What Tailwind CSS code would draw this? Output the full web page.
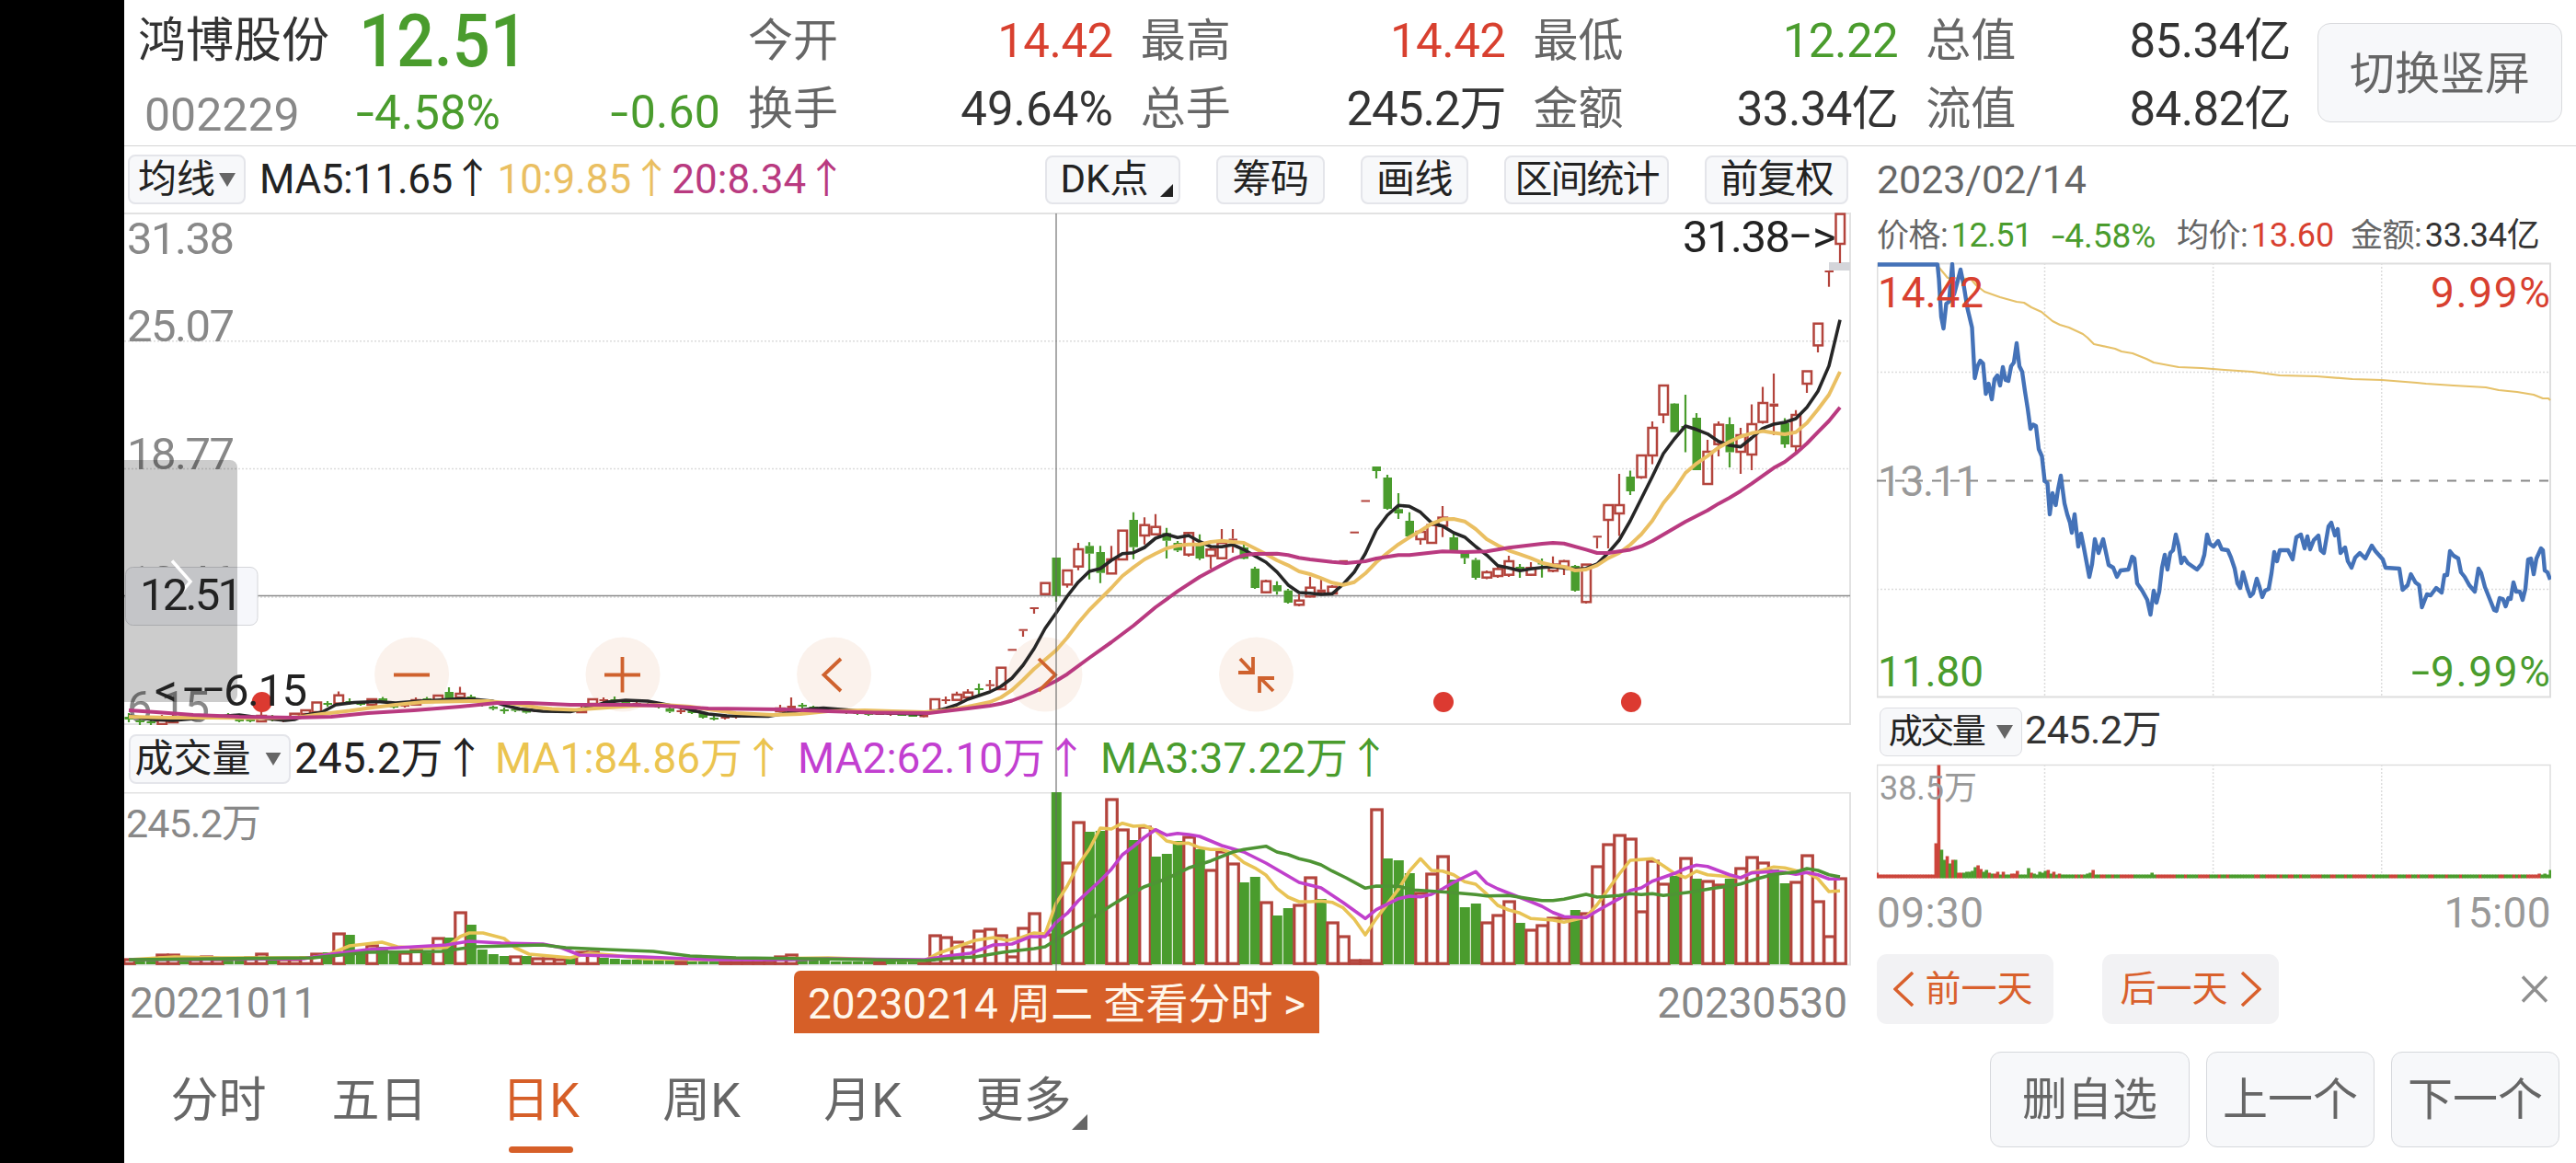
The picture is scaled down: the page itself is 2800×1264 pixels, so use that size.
<!DOCTYPE html>
<html lang="zh-CN">

  <head>
    <meta charset="UTF-8" />
    <meta name="viewport" content="width=device-width, initial-scale=1.0" />
    <script src="https://cdn.jsdelivr.net/npm/@tailwindcss/browser@4"></script>
    <title>鸿博股份 002229</title>
  </head>

  <body class="flex w-[2800px] h-[1264px] overflow-hidden bg-white font-['Roboto','Noto_Sans_CJK_SC',sans-serif] leading-none text-[#333] whitespace-nowrap">
    <aside class="w-[135px] shrink-0 bg-black"></aside>
    <div class="flex flex-col flex-1 min-w-0">

      <!-- quote header -->
      <header class="flex h-[159px] border-b border-[#d5d5d5]">
        <div class="flex flex-col w-[648px] pl-[15px]">
          <div class="flex items-center h-[84px] pt-[5px]">
            <h1 class="w-[240px] text-[52px]">鸿博股份</h1>
            <p class="text-[80px] font-medium text-[#4a9c2d] origin-left scale-x-[.9]">12.51</p>
          </div>
          <div class="flex items-center h-[75px] pt-0.5">
            <p class="w-[237px] pl-[7px] pt-1.5 text-[50px] text-[#888]">002229</p>
            <p class="flex-1 text-[51px] text-[#4a9c2d]"><span class="inline-block mr-1.5 origin-left scale-x-[1.4]">-</span>4.58%</p>
            <p class="text-[50px] tracking-[0.2px] text-[#4a9c2d]"><span class="inline-block mr-0.5 origin-right scale-x-[1.4]">-</span>0.60</p>
          </div>
        </div>
        <dl class="grid grid-cols-4 gap-x-[30px] w-[1677px] ml-[30px] pt-[7px] grid-rows-[74px_74px] text-[51px]">
          <div class="flex items-center justify-between"><dt class="text-[49px] text-[#666]">今开</dt><dd class="text-[#d8402f] tracking-[-0.5px]">14.42</dd></div>
          <div class="flex items-center justify-between"><dt class="text-[49px] text-[#666]">最高</dt><dd class="text-[#d8402f] tracking-[-0.5px]">14.42</dd></div>
          <div class="flex items-center justify-between"><dt class="text-[49px] text-[#666]">最低</dt><dd class="text-[#4a9c2d] tracking-[-0.5px]">12.22</dd></div>
          <div class="flex items-center justify-between"><dt class="text-[49px] text-[#666]">总值</dt><dd class="tracking-[-0.6px]">85.34亿</dd></div>
          <div class="flex items-center justify-between"><dt class="text-[49px] text-[#666]">换手</dt><dd>49.64%</dd></div>
          <div class="flex items-center justify-between"><dt class="text-[49px] text-[#666]">总手</dt><dd class="tracking-[-1px]">245.2万</dd></div>
          <div class="flex items-center justify-between"><dt class="text-[49px] text-[#666]">金额</dt><dd class="tracking-[-0.6px]">33.34亿</dd></div>
          <div class="flex items-center justify-between"><dt class="text-[49px] text-[#666]">流值</dt><dd class="tracking-[-0.6px]">84.82亿</dd></div>
        </dl>
        <button class="w-[266px] h-[108px] mt-[25px] ml-[29px] rounded-[14px] border border-[#d9dadd] bg-[#f7f8fa] pt-0.5 text-[49px] text-[#666]">切换竖屏</button>
      </header>

      <div class="flex h-[965px]">
        <!-- daily K chart -->
        <section class="relative flex flex-col w-[1877px]">
          <div class="flex items-center h-[72px] pl-1 pr-[3px] text-[44px] text-[#222]">
            <button class="flex items-center justify-center gap-1 w-[128px] h-[54px] rounded-lg border-2 border-[#e4e5ea] bg-[#f7f8fa] text-[42px]">均线<svg class="w-[18px] h-[15px]" viewBox="0 0 18 15"><path d="M0 0h18L9 15z" fill="#666" /></svg></button>
            <p class="ml-[15px] tracking-[-0.4px]">MA5:11.65↑</p>
            <p class="ml-[5px] text-[#eabf62]">10:9.85↑</p>
            <p class="text-[#b93a80]">20:8.34↑</p>
            <div class="flex gap-[39px] ml-auto text-[42px]">
              <button class="relative w-[147px] h-[53px] pr-[18px] rounded-lg border-2 border-[#e4e5ea] bg-[#f7f8fa]">DK点<svg class="absolute right-1.5 bottom-1.5 w-3.5 h-3.5" viewBox="0 0 14 14"><path d="M14 0v14H0z" fill="#222" /></svg></button>
              <button class="w-[118px] h-[53px] rounded-lg border-2 border-[#e4e5ea] bg-[#f7f8fa] tracking-[-0.5px]">筹码</button>
              <button class="w-[117px] h-[53px] rounded-lg border-2 border-[#e4e5ea] bg-[#f7f8fa] tracking-[-0.5px]">画线</button>
              <button class="w-[179px] h-[53px] rounded-lg border-2 border-[#e4e5ea] bg-[#f7f8fa] text-[41px] tracking-[-2px]">区间统计</button>
              <button class="w-[156px] h-[53px] rounded-lg border-2 border-[#e4e5ea] bg-[#f7f8fa] tracking-[-1px]">前复权</button>
            </div>
          </div>

          <svg id="kline" class="w-[1877px] h-[557px]" viewBox="135 231 1877 557" font-size="49">
            <g stroke="#dcdcdc" stroke-width="1.5" stroke-dasharray="2 2">
              <path d="M135 370.7H2011M135 509.5H2011M135 649H2011" />
            </g>
            <path d="M135 232H2011V787H135" fill="none" stroke="#e2e2e2" stroke-width="2" />
            <g fill="#888">
              <text x="138" y="276" textLength="117">31.38</text>
              <text x="138" y="371" textLength="117">25.07</text>
              <text x="138" y="510" textLength="117">18.77</text>
              <text x="138" y="649" textLength="117">12.46</text>
              <text x="138" y="785" textLength="90">6.15</text>
            </g>
            <g fill="#fbf2ec">
              <circle cx="447.6" cy="733" r="40.5" />
              <circle cx="677" cy="733" r="40.5" />
              <circle cx="906.6" cy="733" r="40.5" />
              <circle cx="1136" cy="733" r="40.5" />
              <circle cx="1365.5" cy="733" r="40.5" />
            </g>
            <rect x="1988" y="285" width="23" height="9" fill="#d4d5da" />
            <path d="M135 647.5H2011" stroke="#8c8c8c" stroke-width="1.5" />
            <g id="candles"></g>
            <g id="price-ma" fill="none" stroke-width="4" stroke-linejoin="round"></g>
            <g fill="#dc3a31">
              <circle cx="284.7" cy="763" r="11" />
              <circle cx="1569" cy="763" r="11" />
              <circle cx="1773" cy="763" r="11" />
            </g>
            <g fill="none" stroke="#cf622e" stroke-width="3.8">
              <path d="M428 733.5h39M657 733.5h39M676.5 714v38.5M914 716l-18.500 17.500 18.500 17.500M1129 716l18 17.500-18 17.500" />
              <path d="M1348 716l14 15M1362 714v17h-16M1384 751l-14-14M1385 737h-16v16" />
            </g>
            <!-- crosshair price tag -->
            <rect x="136.500" y="616.500" width="143.500" height="63" rx="8" fill="#f6f7fb" stroke="#d5d6da" />
            <path d="M135 500h115a8 8 0 0 1 8 8v247a8 8 0 0 1-8 8H135z" fill="#000" fill-opacity=".2" />
            <path d="M187 609.500l20 22.500-20 24" fill="none" stroke="#fff" stroke-width="3.500" />
            <g fill="#222">
              <text x="152" y="663" textLength="112">12.51</text>
              <text x="168" y="767">&lt;</text>
              <text x="199" y="764" textLength="44" lengthAdjust="spacingAndGlyphs">--</text>
              <text x="243" y="767" textLength="91">6.15</text>
              <text x="1829" y="274" textLength="117">31.38</text>
              <text x="1946" y="271" textLength="22" lengthAdjust="spacingAndGlyphs">-</text>
              <text x="1970" y="274">&gt;</text>
            </g>
          </svg>

          <div class="flex items-center h-[73px] pl-[5px] pb-0.5 text-[46px] text-[#222]">
            <button class="flex items-center justify-center gap-[15px] w-[176px] h-[54px] pr-1 mt-0.5 rounded-lg border-2 border-[#e4e5ea] bg-[#f7f8fa] text-[42px]">成交量<svg class="w-[18px] h-[14px]" viewBox="0 0 18 15"><path d="M0 0h18L9 15z" fill="#666" /></svg></button>
            <p class="w-[218px] ml-[4px]">245.2万↑</p>
            <p class="w-[329px] text-[#ebc450]">MA1:84.86万↑</p>
            <p class="w-[329px] text-[#c23fd0]">MA2:62.10万↑</p>
            <p class="text-[#4a9c2d]">MA3:37.22万↑</p>
          </div>

          <svg id="volume" class="w-[1877px] h-[190px]" viewBox="135 861 1877 190" font-size="43">
            <path d="M135 861.500H2011V1048.500H135" fill="none" stroke="#e2e2e2" stroke-width="2" />
            <text x="137" y="910" fill="#888" textLength="147">245.2万</text>
            <g id="volume-bars"></g>
            <g id="volume-ma" fill="none" stroke-width="3.6" stroke-linejoin="round"></g>
          </svg>

          <div class="flex justify-between h-[73px] pl-[6px] pr-[4px] pt-1 text-[46px] text-[#888]">
            <p class="w-[722px] pt-3 tracking-[-0.5px]">20221011</p>
            <button class="w-[571px] h-[68px] pt-1 rounded-t-[7px] bg-[#d65f28] text-[46px] text-[#fff6ea]">20230214 周二 查看分时 &gt;</button>
            <p class="flex-1 pt-3 text-right">20230530</p>
          </div>
          <div class="absolute left-[1012px] top-[73px] w-0.5 h-[823px] bg-[#666]/55"></div>
        </section>

        <!-- intraday panel for the selected day -->
        <section class="flex flex-col w-[733px] ml-7">
          <p class="h-[72px] pt-[15px] text-[43px] tracking-[-0.1px] text-[#666]">2023/02/14</p>
          <div class="flex items-center h-[48px] pt-0.5 text-[36px] text-[#666]">
            <p class="w-[190px]"><span class="text-[35px] tracking-[-0.5px]">价格</span>:<span class="ml-[3px] tracking-[-0.5px] text-[#4a9c2d]">12.51</span></p>
            <p class="w-[136px] text-[37px] text-[#4a9c2d]"><span class="inline-block mr-1 origin-left scale-x-[1.4]">-</span>4.58%</p>
            <p class="w-[189px]"><span class="text-[35px] tracking-[-0.5px]">均价</span>:<span class="ml-[3px] text-[#d8402f]">13.60</span></p>
            <p><span class="text-[35px] tracking-[-0.5px]">金额</span>:<span class="ml-[3px] tracking-[-0.3px] text-[#333]">33.34亿</span></p>
          </div>
          <svg class="w-[733px] h-[480px] mt-1.5" viewBox="2040 285 733 480" font-size="46">
            <path d="M2222.500 286V758M2405.600 286V758M2588.700 286V758M2040 404.500H2772M2040 640.500H2772" stroke="#dcdcdc" stroke-width="1.500" stroke-dasharray="2 2" />
            <path d="M2040.500 286.500H2772V757.500H2040.500z" fill="none" stroke="#dedede" stroke-width="2" />
            <path d="M2040 522.500H2772" stroke="#888" stroke-width="2" stroke-dasharray="10 10" />
            <text x="2041" y="539" fill="#999" textLength="110">13.11</text>
            <g id="intraday" fill="none" stroke-linejoin="round"></g>
            <g fill="#d8402f">
              <text x="2041" y="334" textLength="115">14.42</text>
              <text x="2642" y="334" textLength="130">9.99%</text>
            </g>
            <g fill="#4a9c2d">
              <text x="2041" y="746" textLength="115">11.80</text>
              <text x="2621" y="745" textLength="20" lengthAdjust="spacingAndGlyphs">-</text>
              <text x="2642" y="746" textLength="130">9.99%</text>
            </g>
          </svg>
          <div class="flex items-center h-[60px] pl-[3px] text-[43px]">
            <button class="flex items-center justify-center gap-3.5 w-[155px] h-[53px] mr-[3px] rounded-lg border border-[#dcdde2] bg-[#f7f8fa] text-[37px] tracking-[-2.5px] text-[#222]">成交量<svg class="w-[18px] h-[15px]" viewBox="0 0 18 15"><path d="M0 0h18L9 15z" fill="#666" /></svg></button>
            <p class="-mt-1 tracking-[-0.5px]">245.2万</p>
          </div>
          <svg class="w-[733px] h-[126px] mt-[5px]" viewBox="2040 830 733 126" font-size="36">
            <path d="M2222.500 831V954M2405.600 831V954M2588.700 831V954" stroke="#dcdcdc" stroke-width="1.500" stroke-dasharray="2 2" />
            <path d="M2040.500 954V831.500H2772V954" fill="none" stroke="#dedede" stroke-width="1.500" />
            <g id="minute-bars"></g>
            <text x="2043" y="869" fill="#999" textLength="106">38.5万</text>
          </svg>
          <div class="flex justify-between items-center h-[71px] text-[46px] tracking-[0.4px] text-[#999]">
            <p>09:30</p>
            <p>15:00</p>
          </div>
          <div class="flex items-center mt-2.5 text-[39px] text-[#d9602c]">
            <button class="flex items-center justify-center gap-3 w-[192px] h-[76px] pr-1 rounded-[11px] bg-[#f2f2f4]"><svg class="w-[22px] h-[38px]" viewBox="0 0 22 38"><path d="M21 1L2 19l19 18" fill="none" stroke="#d9602c" stroke-width="3.500" /></svg>前一天</button>
            <button class="flex items-center justify-center gap-3.5 w-[192px] h-[76px] ml-[53px] rounded-[11px] bg-[#f2f2f4]">后一天<svg class="w-[22px] h-[38px]" viewBox="0 0 22 38"><path d="M1 1l19 18L1 37" fill="none" stroke="#d9602c" stroke-width="3.500" /></svg></button>
            <svg class="w-[30px] h-[30px] ml-auto mr-[3px]" viewBox="0 0 30 30"><path d="M2 1.500l26 27M28 1.500l-26 27" stroke="#8f8f8f" stroke-width="3.4" /></svg>
          </div>
        </section>
      </div>

      <!-- period tabs -->
      <footer class="flex flex-1 justify-between pl-[15px] pr-[18px] text-[52px] text-[#666]">
        <nav class="flex text-center">
          <p class="w-[175px] pt-[47px]">分时</p>
          <p class="w-[175px] pt-[47px]">五日</p>
          <div class="flex flex-col items-center w-[175px] pt-[47px] text-[#d65f28]">
            <p>日K</p>
            <i class="w-[70px] h-[7px] mt-[23px] rounded-full bg-[#d65f28]"></i>
          </div>
          <p class="w-[175px] pt-[47px]">周K</p>
          <p class="w-[175px] pt-[47px]">月K</p>
          <p class="relative w-[175px] pt-[47px]">更多<svg class="absolute right-[18px] bottom-9 w-[17px] h-[17px]" viewBox="0 0 14 14"><path d="M14 0v14H0z" fill="#666" /></svg></p>
        </nav>
        <div class="flex gap-[18px] pt-[19px] text-[49px]">
          <button class="w-[217px] h-[104px] rounded-xl border-[1.5px] border-[#d6d8dc] bg-[#f7f8fa]">删自选</button>
          <button class="w-[183px] h-[104px] rounded-xl border-[1.5px] border-[#d6d8dc] bg-[#f7f8fa]">上一个</button>
          <button class="w-[183px] h-[104px] rounded-xl border-[1.5px] border-[#d6d8dc] bg-[#f7f8fa]">下一个</button>
        </div>
      </footer>
    </div>

    <script>
      const RED = '#b3443c'
      const GREEN = '#4a9c2d'
      const x = i => 140 + 12 * i
      const line = (pts, color, extra = '') => `<polyline points="${pts}" stroke="${color}" ${extra}/>`

      // type, body top, body bottom, high, low   (r = hollow up, f = flat up, g = down)
      const candles = `g 779 782 775 785;g 783 785 780 788;g 784 786 783 788;r 783 787 777 787;r 780 785 775 785;g 777 779 775 781;f 778 780 777 780;f 778 780 777 781;g 777 779 776 781;g 777 779 775 782;g 782 784 781 785;g 782 784 781 785;r 778 784 773 784;g 779 781 777 784;f 782 784 781 785;r 775.7 779 775 779;r 772 776 771 776;r 763.5 774 763 774;g 764 766 762 768;r 755.7 764.600 751.600 766;g 762 764 759 766;g 764 766 762 767;r 760 766 760 766;g 759 762 757.500 764;g 767 769 765 770;f 766 768 765 769;r 761 765.700 758 766;g 759 761 757.500 762;r 756 761 755 761;g 752 759 747 760;r 754 758 746.500 759;g 757 759 755 762;g 764 766 762 768;g 768 770.500 767 772;g 771 773 769 775.700;g 770.500 772.500 769 774;g 772 774.500 770 775.500;f 772 774 771 774;f 772 774 771 774;f 772 774 771 774;g 771 773 770 774;r 771.700 774 764 774;r 760 765 760 765;f 760 762 758 764;g 760 762 757 764;g 763 765 762 766;f 764 766 763 767;g 765 767 764 768;g 767 769 765 770;g 770 773.500 769 775;f 772 774 770 776;g 772.500 775 771 776;g 775 780 774 781;g 780 782 778 783;f 779 781 778 782;f 778 780 777 781;g 778 780 777 780;f 777 779 776 779;g 776 778 775 779;r 770 773 766 774;f 767 770 758 771;g 766 768 764 770;g 768 770 767 771;f 770 772 769 772;g 771 773 770 774;g 772 775 771 776;g 774 776 773 777;g 775 777 773 778;f 775 777 774 777;f 775 777 774 778;g 776 778 775 778;g 777 779 776 779;f 777 779.500 776 780;r 760 772 760 772;f 760 762 757 765;r 755 760.700 751.700 761;r 752.700 758 749 759;g 748 750 743 755;f 743.700 745.700 739 750;r 725.700 749 725.700 749;f 705.300 707.300 705.300 707.300;f 683.700 685.700 683.700 692;f 660 662 660 667;r 633.700 645.700 633.700 645.700;g 606 647.700 606 654;r 620 635.300 620 638.700;r 597 615.700 590 619.700;g 593.300 601.700 589.300 629.700;g 600 622.700 593.300 633.700;r 608 623.300 593.300 623.300;r 576.700 608 576.700 608;g 565 594.700 556.700 607.700;r 570.700 582 562.300 591.700;r 572.700 580.700 558.700 581.700;g 579.300 587.700 573.700 607;g 590 598.300 588 600;r 579.300 602.700 578 605;g 591.700 607 580.700 608.700;r 597.300 604 595 618;r 590 606.700 575 606.700;f 585.500 587.500 575 600.700;g 595 607.300 591.700 608;g 618 639 616 640;r 631.700 643.700 630 645;g 636 642.700 631.700 646.300;g 641.700 655 640 656;r 652.700 657.300 646 659;r 638.700 648.300 626.700 649.300;f 640.700 644 630 646;r 637.700 645 636 646;f 608.800 610.800 608.800 610.800;f 577.700 579.700 577.700 579.700;f 543.500 545.500 543.500 545.500;g 507 512 507 520;g 519 553 516 554;g 553.300 558 536 564;g 566 583 556.700 584.400;r 578 586 576 592;r 570.700 590 569 590;r 562.600 571.500 550 583.700;g 584 598.500 579.600 598.500;g 601 606.600 600 613;g 608.500 628 606.600 630;r 622 627.700 620 629.500;r 618.400 626 616 628;r 610 624.700 604 627;g 616 618 613 628;r 617.300 624.700 611 626;g 611.500 613.500 607 627.700;r 613.600 620.300 604.800 622;r 610 616 608.500 625;g 615 642 614 643;r 613.600 654.300 613.600 656;f 582.300 584.300 582.300 596;r 549 565 549 596;r 549 558 515 582.600;g 518 534 511.500 538;r 495 518.600 495 520.400;r 465 495 458 504.500;r 419 450.500 419 460;g 438.600 469.700 438 470;g 463 465 429 491.500;g 454 511 449 511;r 491 526 478 526;r 461.600 482.700 458 496;g 461 491.500 453.400 508;r 473 491 465 515;r 461 494 439.400 511;r 438 458.600 420.500 460.500;f 438.600 442 406 473;g 460 483 454.500 486.700;r 451 485 445.700 491;r 403.500 417 403.500 427;r 351.700 375.400 351.700 383;f 294 296 294 311.700;r 232.600 265 232.600 286`
      document.getElementById('candles').innerHTML = candles.split(';').map((row, i) => {
        const [type, ...rest] = row.split(' ')
        const [top, bottom, high, low] = rest.map(Number)
        const color = type === 'g' ? GREEN : RED
        const wick = `<path d="M${x(i)} ${high}V${top}M${x(i)} ${bottom}V${low}" stroke="${color}" stroke-width="2.2"/>`
        const body = type === 'r'
          ? `<rect x="${x(i) - 4.5}" y="${top}" width="9.5" height="${bottom - top}" fill="none" stroke="${color}" stroke-width="2.5"/>`
          : `<rect x="${x(i) - 4.5}" y="${top}" width="9.5" height="${bottom - top}" fill="${color}"/>`
        return wick + body
      }).join('')

      document.getElementById('price-ma').innerHTML =
        line('140,778 165,782 188,783 212,781 260,777 290,781 310,783 320,782 333,777 350,774 365,766 385,763.5 410,762.5 430,764 455,762 475,761 498,759.5 515,760 535,762 550,767 565,770.5 590,773 620,773.5 640,769 660,763 680,761 704,762 720,765 745,770 770,776 790,778 835,778.5 850,776 875,771 895,769.5 920,771.5 950,774.5 1000,776 1016,773 1028,770 1040,766 1052,760 1064,756 1076,752 1088,746 1100,737 1112,723 1124,705 1136,683 1148,666 1160,648 1172,632.7 1184,621 1196,618 1208,609 1220,601.7 1232,600.7 1244,595 1256,585 1268,580.7 1280,584.3 1292,582 1304,588.7 1316,594 1328,594.3 1340,592 1352,597.3 1364,604.3 1376,611 1388,621.7 1400,635.7 1412,644 1424,644.7 1436,646 1448,645.3 1460,635 1472,621.7 1484,601.7 1496,576 1508,560 1520,549.3 1532,550.3 1544,556.7 1556,568.3 1568,571.7 1580,579 1592,583.7 1604,594 1616,603.3 1628,614.7 1640,617.3 1652,620.3 1664,618.3 1676,616.7 1688,616 1712,618.8 1724,617.7 1736,613 1748,601 1760,587 1772,566 1784,542 1796,518 1808,493 1820,477 1832,463 1844,466.8 1856,471.6 1868,479.7 1880,484 1892,485.6 1904,476 1916,465.6 1928,461 1940,459 1952,455 1964,442.7 1976,425.3 1988,397.6 2000,347.6', '#262626', 'stroke-width="3.6"') +
        line('140,779 185,780 230,780 280,780.5 320,780 350,776 380,772.5 405,769 430,766 460,763 510,762 530,762 560,765 585,769 600,770.5 625,771.5 660,769 690,767 720,766 750,768 770,771 800,775 840,777 870,776 900,773 940,772 970,773 1005,774 1030,772 1052,768 1076,763 1088,758 1100,750 1112,739 1124,727 1136,717 1148,706.7 1160,693 1172,677 1184,663 1196,651 1208,639 1220,626 1232,616.7 1244,608 1256,601.7 1268,596 1280,593 1292,591.7 1304,591.7 1316,589 1328,587.7 1340,589 1352,590 1364,596 1376,602.3 1388,609 1400,614.3 1412,621 1424,624 1436,628.3 1448,633.3 1460,635.7 1472,632.7 1484,623.3 1496,611 1508,601 1520,591.7 1532,584 1544,577 1556,569.3 1568,564.3 1580,564 1592,566.7 1604,575 1616,586 1628,592.7 1640,598.3 1652,602.3 1664,606.7 1676,611.7 1688,614.4 1700,616 1712,620 1724,619 1736,614.4 1748,606.6 1760,601 1772,592 1784,580.7 1796,566 1808,546.7 1820,532 1832,514 1844,503.8 1856,495.6 1868,486.4 1880,480 1892,474.5 1904,470.8 1916,468.6 1928,470.5 1940,472 1952,469.7 1964,459.7 1976,445 1988,429 2000,404', '#eabf62') +
        line('140,772 170,774 210,777 260,779 320,780 360,779 400,775 450,772 500,768 540,764 575,764 620,766 680,766 720,767 770,770 850,771 900,773 950,774.5 1010,775 1052,770 1076,767 1088,764.7 1100,761.5 1112,757 1124,752 1136,746 1148,740 1160,732.7 1184,715 1208,698 1232,680 1256,660 1280,642.7 1304,627 1328,614 1340,607.7 1352,603.3 1364,602 1388,601.7 1400,603.3 1412,606.3 1424,608 1448,610.7 1463,612 1484,610 1496,607 1520,603.3 1532,603.3 1568,599.3 1592,600 1616,599.3 1640,595.3 1676,591 1688,590 1700,590.7 1724,597.4 1736,601 1748,601 1772,597.4 1784,593.7 1796,588 1832,567 1856,554.8 1868,547.4 1880,541 1892,533.7 1904,525.6 1928,508.6 1940,502 1952,492.7 1964,482 1976,469.7 1988,457.5 2000,442.7', '#b93a80')

      // bar tops, negative for a falling day
      const tops = [1042, -1042, -1043, 1037, 1037, -1042, 1042, 1039, 1042, -1042, -1043, 1040, 1036, -1040, 1042, 1042, 1040, 1036, -1035, 1014, -1016, -1035, 1027, -1029, -1033, 1035, 1032, -1036, 1019, -1019, 991, -1005, -1032, -1037, -1039, 1039, -1039, 1041, 1041, 1042, -1040, 1034, 1034, -1041, -1042, -1043, -1043, -1043, -1043, -1044, 1044, -1045, -1045, -1045, 1045, 1045, 1045, 1045, 1043, 1039, 1037, -1044, -1044, -1044, -1045, -1045, -1045, -1045, 1045, -1045, -1045, -1045, 1044,
        1016, 1018, 1023, 1028, 1011, 1009, 1016, 1039, 1008, 992, 1015, -861, 937, 893, -904, -903, 868, 901, -913, 898, -931, -928, -914, 909, -923, 945, 925, 938, -959, -953, 980, -995, -987, 983, 953, -977, 1002, 1017, 1043, 1043, 879, -933, -935, -949, 970, 949, 930, -956, -986, -982, 1002, 994, 979, -1003, 1010, 1005, 997, 997, -989, 992, 941, 917, 907, 911, 990, 935, 960, -952, 932, -955, 957, 961, -955, 943, 931, 937, -945, -960, 958, 929, 979, 1017, 954]
      document.getElementById('volume-bars').innerHTML = tops.map((t, i) => t < 0
        ? `<rect x="${x(i) - 5.2}" y="${-t}" width="11" height="${1048 + t}" fill="${GREEN}"/>`
        : `<rect x="${x(i) - 5.2}" y="${t + 1}" width="11.5" height="${Math.max(1046.3 - t, 1)}" fill="none" stroke="${RED}" stroke-width="3.2"/>`
      ).join('')

      document.getElementById('volume-ma').innerHTML =
        line('140,1043 190,1040 240,1041 340,1041 358,1037 380,1028 415,1024 432,1029 450,1030 485,1030 500,1018 510,1014 525,1014 548,1020 560,1030 575,1037 620,1041 640,1036 665,1038 700,1042 760,1043 900,1041 960,1043 1005,1044 1020,1036 1040,1029 1060,1022 1080,1019 1095,1022 1110,1019 1124,1014 1136,1015 1148,981.7 1160,963 1172,940 1184,923 1196,900 1208,901 1220,894.7 1232,898 1244,897.3 1256,902.7 1268,914 1280,916.7 1292,916.3 1304,921.3 1316,923.3 1328,923.3 1340,927.7 1352,937.3 1364,943.3 1376,951 1388,965.7 1400,975 1412,980 1424,980 1436,979.3 1448,980.7 1460,986.7 1472,999 1484,1016 1496,998.3 1508,982.3 1520,966.7 1532,946.7 1544,933.3 1556,946 1568,946.7 1580,950.7 1592,958.3 1604,961 1616,971.7 1628,984 1640,989 1652,992.3 1664,998.3 1688,1000 1700,1002.3 1724,996.7 1736,983.3 1748,966.7 1760,950 1772,935 1796,933.3 1808,941 1820,949.3 1832,953.7 1844,946.7 1856,950.7 1880,952.7 1892,954 1904,948.3 1916,945.7 1928,942.3 1940,943.3 1952,946.3 1964,948.3 1976,955 1988,969 2000,968.3', '#e8c355') +
        line('140,1043 330,1042 360,1037 400,1032 450,1029 485,1027 510,1023 545,1025 590,1026 610,1030 630,1038 700,1040 770,1043 860,1043 900,1042 1005,1043 1030,1039 1055,1036 1080,1027 1100,1026 1120,1018 1136,1018 1148,1002.3 1160,992.7 1172,979 1196,957 1208,944.7 1220,929 1232,920 1244,910 1256,901.7 1268,907.7 1280,905.7 1292,907 1304,909 1316,914 1328,919 1352,926 1376,938 1400,952 1412,959 1436,965 1460,981 1484,998.3 1496,988.7 1520,976.7 1532,974 1544,974.7 1556,972 1568,966 1580,959 1604,947.3 1616,960 1628,966 1640,970.7 1664,980 1676,985 1688,991.7 1700,996.3 1724,997.3 1736,990 1748,983.3 1760,976.7 1772,967.7 1784,965 1796,957.7 1820,949.3 1832,944 1844,940.3 1856,941.7 1880,950.7 1892,954 1904,948.7 1928,947 1940,948 1952,950.3 1964,948.3 1976,950.7 1988,955.3 2000,955.3', '#c040cc') +
        line('140,1043 340,1041 400,1035 480,1034 515,1029 590,1027 615,1030 660,1032 710,1034 750,1039 800,1041 880,1042 1005,1044 1040,1041 1060,1040 1090,1035 1124,1031 1136,1029 1157,1015.7 1180,1002.7 1196,991.7 1208,984 1220,976.7 1244,963.7 1268,955 1292,943.3 1316,935.7 1340,926 1352,923.3 1376,919.7 1388,926 1400,928.7 1412,933.3 1424,936 1436,940 1448,946.7 1463,954 1484,965.3 1496,963 1520,963.3 1537,967.3 1578,970 1604,972.3 1616,973.7 1640,973.3 1664,977 1676,978.7 1688,978.7 1700,977.3 1724,972 1736,975 1760,973.3 1772,971.3 1784,972.3 1796,971.3 1808,973.3 1840,969.3 1860,965.7 1880,963 1892,960.7 1910,955 1928,950.3 1952,947.7 1964,944 1976,946 1988,950.7 2000,953', '#4e9434')

      document.getElementById('intraday').innerHTML =
        line('2107,290 2117,302 2142,303 2148,310 2157,317 2174,323 2192,328 2200,329 2208,334 2219,339 2231,349 2239,353 2249,356 2264,363 2269,367 2276,374 2299,379 2306,382 2318,384 2333,390 2341,394 2368,399 2393,400 2418,402 2448,404 2478,408 2518,409 2557,412 2589,413 2627,416 2637,417 2667,419 2702,421 2716,424 2736,426 2754,429 2764,433 2770,433 2772,435', '#e6c169', 'stroke-width="2.2"') +
        line('2041,287.5 2106,287.5 2107.5,303 2110,344 2112.5,357 2115.5,330 2118.5,328 2122,287 2124,320 2127.5,307 2131,293 2134.5,310 2138.5,335 2143.5,356 2146.5,411 2149.5,398 2152.5,392 2155.5,395 2158.5,428 2161.5,417 2165,434 2168,412 2171,408 2174,419 2177,399 2180,413 2183,414 2186,398 2189,394 2192,373 2195,398 2198,404 2201,425 2204,444 2207,466 2210,461.5 2213,463 2216,488 2219.5,496 2222.5,523 2225.5,525 2228,559 2231,536 2234.5,549 2237,532 2240,517 2244,547 2247,559 2250,568 2252,579 2255,559 2259,594 2262,580 2265,595 2271,627 2274,613 2277,586 2281,601 2286,586 2292,614 2297,617 2301,627 2305,620 2313.5,619 2317.5,605 2320,607 2323,634 2328.5,642 2334,652 2337.5,668 2341,642 2344,655 2347,643 2350,617 2353,603 2356,619 2359,601 2362,598 2365,581 2368,593 2371,612 2374,606 2378,612 2388,619 2393,613 2396,603 2399,581 2402,591 2406,594 2411,588 2415,597 2421.5,598 2425,606 2429,618 2432,634 2435,639 2438,622 2443,640 2446,648 2449,645 2453,629 2456,638 2459,649 2462,642 2466,640 2469,623 2472,600 2475,610 2478,598 2487,598 2492,608 2496,584 2501,581 2505,596 2508,583 2511,597 2515,587 2520,582 2522.5,598 2526,601 2531,572 2534,568 2538,582 2541,575 2544,601 2549,595 2552,610 2556,617 2560,606 2565,601 2571,607 2578,593 2582,599 2590,608 2593,617 2608,618 2611.5,641 2617,636 2620.5,624 2625.5,633 2629.5,636 2632.5,660 2638,646 2642,647 2648,639 2654,644 2657,625 2660,625 2663,599 2667,604 2672,607 2675,622 2679,627 2684,636 2690,643 2694,618 2697,623 2701,638 2707,653 2711,663 2713.5,664 2717,650 2720.5,651 2723.5,659 2726.5,650 2729,651 2732,633 2735,643 2739,643 2742,652 2745,640 2748,608 2751,607 2754,624 2757,607 2762,596 2764,598 2766,620 2769,622 2772,630', '#4472b8', 'stroke-width="4.4"')

      // minute volume: index -> signed bar height, everything else sits on the 4px floor
      const heights = { 0: 6, 21: 38, 22: 123, 23: -31, 24: -20, 25: 24, 26: -16, 27: 20, 28: -20, 29: 6, 30: 6, 31: -6, 32: -7, 33: -7, 34: -8, 35: -12, 36: 14, 37: 10, 38: -7, 39: -9, 40: 6, 41: -5, 42: 5, 43: 7, 44: -4, 45: 7, 46: -4, 47: -4, 48: 5, 49: 5, 50: 8, 54: -11, 55: 6, 56: -5, 58: -7, 59: -6, 60: -8, 61: 9, 62: -5, 63: 7, 64: -4, 65: 5, 75: -5, 76: -6, 77: 9, 98: -6, 236: 5, 238: -5, 240: -9 }
      const floorRed = [[1, 20], [71, 71], [73, 73], [80, 81], [84, 84], [87, 91], [100, 106], [110, 110], [115, 118], [122, 122], [125, 125], [135, 136], [139, 142], [144, 144], [147, 148], [151, 151], [155, 158], [162, 163], [167, 167], [170, 174], [177, 177], [183, 185], [189, 190], [193, 193], [197, 198], [203, 203], [208, 208], [215, 215], [222, 223], [227, 227], [229, 229], [232, 235]]
      let bars = ''
      for (let i = 0; i <= 240; i++) {
        const h = heights[i] ?? (floorRed.some(([a, b]) => i >= a && i <= b) ? 4 : -4)
        bars += `<rect x="${2038.5 + i * 3.05}" y="${954.5 - Math.abs(h)}" width="3.6" height="${Math.abs(h)}" fill="${h > 0 ? '#cc453b' : GREEN}"/>`
      }
      document.getElementById('minute-bars').innerHTML = bars
    </script>
  </body>

</html>
